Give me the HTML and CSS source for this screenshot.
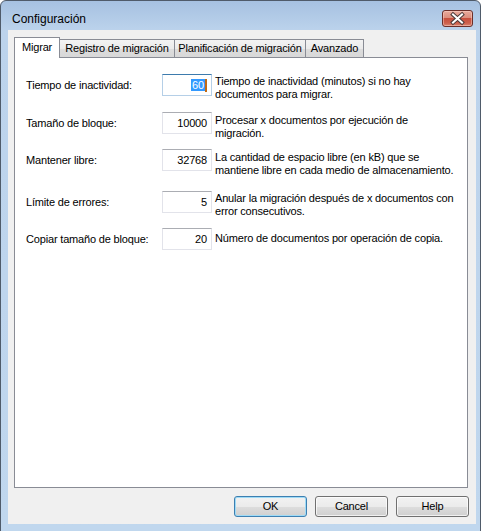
FILE: index.html
```html
<!DOCTYPE html>
<html lang="es">
<head>
<meta charset="utf-8">
<title>Configuración</title>
<link rel="stylesheet" href="styles.css">
</head>
<body>
<div class="window">
  <div class="titlebar">
    <span class="title">Configuración</span>
    <div class="close">
      <svg width="29" height="15" viewBox="0 0 29 15">
        <path d="M10 3.5 L19 11.5 M19 3.5 L10 11.5" stroke="#4a3a3a" stroke-width="4" stroke-linecap="square" fill="none"/>
        <path d="M10 3.5 L19 11.5 M19 3.5 L10 11.5" stroke="#ffffff" stroke-width="2" stroke-linecap="square" fill="none"/>
      </svg>
    </div>
  </div>
  <div class="client">
    <div class="tabs">
      <div class="tab tab-active tab-migrar">Migrar</div>
      <div class="tab tab-registro">Registro de migración</div>
      <div class="tab tab-plan">Planificación de migración</div>
      <div class="tab tab-avanzado">Avanzado</div>
    </div>
    <div class="panel">
      <div class="form">
        <div class="label">Tiempo de inactividad:</div>
        <div class="field field-focus"><span class="sel">60</span><span class="caret"></span></div>
        <div class="desc">Tiempo de inactividad (minutos) si no hay<br>documentos para migrar.</div>

        <div class="label">Tamaño de bloque:</div>
        <div class="field">10000</div>
        <div class="desc desc-2">Procesar x documentos por ejecución de<br>migración.</div>

        <div class="label">Mantener libre:</div>
        <div class="field">32768</div>
        <div class="desc desc-2">La cantidad de espacio libre (en kB) que se<br>mantiene libre en cada medio de almacenamiento.</div>

        <div class="label">Límite de errores:</div>
        <div class="field">5</div>
        <div class="desc">Anular la migración después de x documentos con<br>error consecutivos.</div>

        <div class="label">Copiar tamaño de bloque:</div>
        <div class="field">20</div>
        <div class="desc desc-3">Número de documentos por operación de copia.</div>
      </div>
    </div>
    <div class="buttons">
      <div class="btn btn-default">OK</div>
      <div class="btn">Cancel</div>
      <div class="btn">Help</div>
    </div>
  </div>
</div>
</body>
</html>
```

FILE: styles.css
```css
html, body {
  margin: 0;
  padding: 0;
  background: #ffffff;
}

body {
  font-family: "Liberation Sans", Arial, sans-serif;
  font-size: 11px;
  letter-spacing: -0.17px;
  color: #000000;
}

.window {
  box-sizing: border-box;
  width: 481px;
  height: 532px;
  border: 1px solid #4f5b6a;
  border-radius: 6px 6px 0 0;
  background: linear-gradient(to bottom, #a6c1e1 0px, #bcd3ec 30px, #c0d7ee 100%);
  display: flex;
  flex-direction: column;
  overflow: hidden;
}

.titlebar {
  height: 29px;
  flex: none;
  display: flex;
  align-items: flex-start;
  justify-content: space-between;
  padding: 0 7px 0 11px;
}

.title {
  font-size: 12px;
  letter-spacing: 0;
  line-height: 16px;
  margin-top: 10px;
  color: #000000;
}

.close {
  box-sizing: border-box;
  width: 31px;
  height: 17px;
  margin-top: 9px;
  border: 1px solid #6b2f2a;
  border-radius: 3px;
  background: linear-gradient(to bottom, #e8aa9c 0%, #dc8e7e 45%, #c7503e 50%, #cd5f4b 80%, #d98570 100%);
  box-shadow: inset 0 0 0 1px rgba(255, 220, 210, 0.45);
  display: flex;
  align-items: center;
  justify-content: center;
}

.close svg {
  display: block;
}

.client {
  box-sizing: border-box;
  height: 494px;
  margin: 0 4px 0 7px;
  background: #f0f0f0;
  padding: 7px 7px 0 6px;
  display: flex;
  flex-direction: column;
}

.tabs {
  height: 20px;
  display: flex;
  align-items: flex-end;
  flex: none;
}

.tab {
  box-sizing: border-box;
  height: 18px;
  border-top: 1px solid #898c95;
  border-right: 1px solid #898c95;
  background: linear-gradient(to bottom, #f3f3f3 0%, #ebebeb 50%, #dddddd 51%, #d8d8d8 100%);
  line-height: 17px;
  text-align: center;
  white-space: nowrap;
}

.tab-active {
  height: 21px;
  border-left: 1px solid #898c95;
  background: #ffffff;
  margin-bottom: -1px;
  position: relative;
  z-index: 1;
  line-height: 19px;
}

.tab-migrar { width: 46px; }
.tab-registro { width: 115px; }
.tab-plan { width: 131px; }
.tab-avanzado { width: 58px; }

.panel {
  box-sizing: border-box;
  width: 454px;
  height: 431px;
  flex: none;
  border: 1px solid #898c95;
  background: #ffffff;
  padding: 16px 0 0 11px;
}

.form {
  display: grid;
  grid-template-columns: 133px 50px auto;
  grid-template-rows: 38px 37px 42px 37px 22px;
  column-gap: 3px;
}

.label {
  height: 22px;
  line-height: 22px;
  white-space: nowrap;
}

.field {
  box-sizing: border-box;
  height: 22px;
  border: 1px solid #e2e3ea;
  border-top-color: #abadb3;
  background: #ffffff;
  text-align: right;
  padding-right: 4px;
  line-height: 20px;
  display: flex;
  justify-content: flex-end;
  align-items: center;
}

.field-focus {
  border-color: #b5cfe7;
  border-top-color: #3d7bad;
}

.sel {
  background: #3399ff;
  color: #ffffff;
  line-height: 12px;
  height: 12px;
  padding: 0 1px;
}

.caret {
  width: 2px;
  height: 13px;
  background: #c26a14;
}

.desc {
  line-height: 13px;
  white-space: nowrap;
  padding-top: 1px;
}

.desc-2 {
  padding-top: 2px;
}

.desc-3 {
  padding-top: 4px;
}

.buttons {
  display: flex;
  justify-content: flex-end;
  gap: 8px;
  margin-top: 8px;
  padding-right: 0;
}

.btn {
  box-sizing: border-box;
  width: 73px;
  height: 21px;
  border: 1px solid #707070;
  border-radius: 3px;
  background: linear-gradient(to bottom, #f2f2f2 0%, #ebebeb 50%, #dddddd 51%, #cfcfcf 100%);
  box-shadow: inset 0 0 0 1px rgba(255, 255, 255, 0.7);
  text-align: center;
  line-height: 19px;
}

.btn-default {
  border-color: #3c7fb1;
  box-shadow: inset 0 0 0 1px #9fdbf6;
}
```
